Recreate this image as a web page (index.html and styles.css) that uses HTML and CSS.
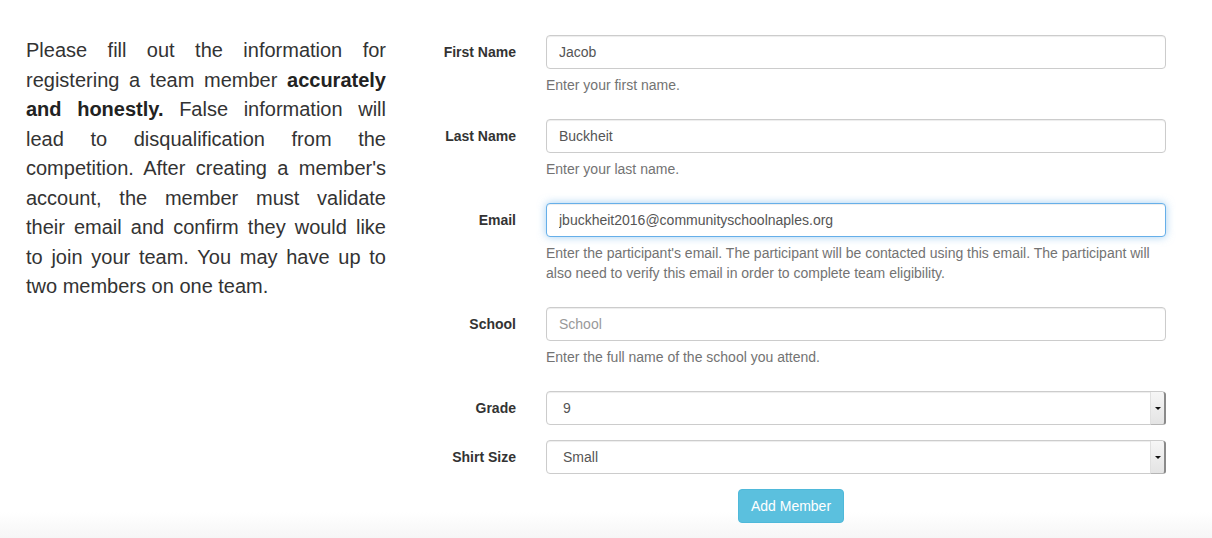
FILE: index.html
```html
<!DOCTYPE html>
<html>
<head>
<meta charset="utf-8">
<link rel="stylesheet" href="styles.css">
</head>
<body>
<div class="page">
  <div class="intro">
    <p class="lead">
      <span class="ln">Please fill out the information for</span>
      <span class="ln">registering a team member <b>accurately</b></span>
      <span class="ln"><b>and honestly.</b> False information will</span>
      <span class="ln">lead to disqualification from the</span>
      <span class="ln">competition. After creating a member's</span>
      <span class="ln">account, the member must validate</span>
      <span class="ln">their email and confirm they would like</span>
      <span class="ln">to join your team. You may have up to</span>
      <span class="ln last">two members on one team.</span>
    </p>
  </div>
  <form class="form">
    <div class="group">
      <label class="label">First Name</label>
      <div class="field">
        <input class="control" type="text" value="Jacob">
        <p class="help">Enter your first name.</p>
      </div>
    </div>
    <div class="group">
      <label class="label">Last Name</label>
      <div class="field">
        <input class="control" type="text" value="Buckheit">
        <p class="help">Enter your last name.</p>
      </div>
    </div>
    <div class="group">
      <label class="label">Email</label>
      <div class="field">
        <input class="control focus" type="text" value="jbuckheit2016@communityschoolnaples.org">
        <p class="help">Enter the participant's email. The participant will be contacted using this email. The participant will also need to verify this email in order to complete team eligibility.</p>
      </div>
    </div>
    <div class="group">
      <label class="label">School</label>
      <div class="field">
        <input class="control" type="text" placeholder="School">
        <p class="help">Enter the full name of the school you attend.</p>
      </div>
    </div>
    <div class="group">
      <label class="label">Grade</label>
      <div class="field">
        <div class="select-wrap">
          <select class="control select"><option>9</option></select>
          <span class="stepper"><span class="caret"></span></span>
        </div>
      </div>
    </div>
    <div class="group">
      <label class="label">Shirt Size</label>
      <div class="field">
        <div class="select-wrap">
          <select class="control select"><option>Small</option></select>
          <span class="stepper"><span class="caret"></span></span>
        </div>
      </div>
    </div>
    <div class="actions">
      <button type="button" class="btn">Add Member</button>
    </div>
  </form>
</div>
</body>
</html>
```

FILE: styles.css
```css
html, body {
  margin: 0;
  padding: 0;
}
body {
  height: 538px;
  overflow: hidden;
  font-family: "Liberation Sans", Arial, sans-serif;
  color: #333;
  background: linear-gradient(to bottom, #ffffff 0, #ffffff 512px, #f6f6f6 538px);
}
.page {
  display: flex;
  padding-top: 35px;
}
.intro {
  width: 360px;
  padding-left: 26px;
  flex: none;
}
.lead {
  margin: 0;
  padding-top: 1px;
  font-size: 20px;
  line-height: 29.5px;
  color: #333;
}
.ln {
  display: block;
  text-align: justify;
  text-align-last: justify;
}
.ln.last {
  text-align-last: left;
}
.lead b {
  font-weight: bold;
  color: #222;
}
.form {
  margin-left: 15px;
  width: 780px;
}
.group {
  display: flex;
  margin-bottom: 15px;
}
.label {
  width: 115px;
  padding-right: 15px;
  padding-top: 7px;
  text-align: right;
  font-size: 14px;
  line-height: 20px;
  font-weight: bold;
  color: #333;
  flex: none;
}
.field {
  width: 620px;
  padding-left: 15px;
  flex: none;
}
.control {
  display: block;
  box-sizing: border-box;
  width: 100%;
  height: 34px;
  margin: 0;
  padding: 6px 12px;
  font-family: "Liberation Sans", Arial, sans-serif;
  font-size: 14px;
  line-height: 20px;
  color: #555;
  background: #fff;
  border: 1px solid #ccc;
  border-radius: 4px;
  box-shadow: inset 0 1px 1px rgba(0, 0, 0, .075);
  outline: none;
}
.control::placeholder {
  color: #999;
}
.control.focus {
  border-color: #66afe9;
  box-shadow: inset 0 1px 1px rgba(0, 0, 0, .075), 0 0 8px rgba(102, 175, 233, .6);
}
.help {
  margin: 6px 0 9px;
  font-size: 14px;
  line-height: 20px;
  color: #737373;
}
.select-wrap {
  position: relative;
}
.select {
  appearance: none;
  -webkit-appearance: none;
  padding-left: 16px;
}
.stepper {
  position: absolute;
  right: 0;
  top: 1px;
  bottom: 0;
  width: 13px;
  background: linear-gradient(to bottom, #f6f6f6, #e4e4e4);
  border-left: 1px solid #e0e0e0;
  border-right: 2px solid #8a8a8a;
  border-bottom: 1px solid #b5b5b5;
  border-radius: 0 3px 3px 0;
  display: flex;
  align-items: center;
  justify-content: center;
}
.caret {
  width: 0;
  height: 0;
  border-left: 3px solid transparent;
  border-right: 3px solid transparent;
  border-top: 3px solid #111;
}
.actions {
  display: flex;
  justify-content: center;
}
.btn {
  font-family: "Liberation Sans", Arial, sans-serif;
  font-size: 14px;
  line-height: 20px;
  padding: 6px 12px;
  color: #fff;
  background: #5bc0de;
  border: 1px solid #4fb9da;
  border-radius: 4px;
  height: 34px;
}
```
